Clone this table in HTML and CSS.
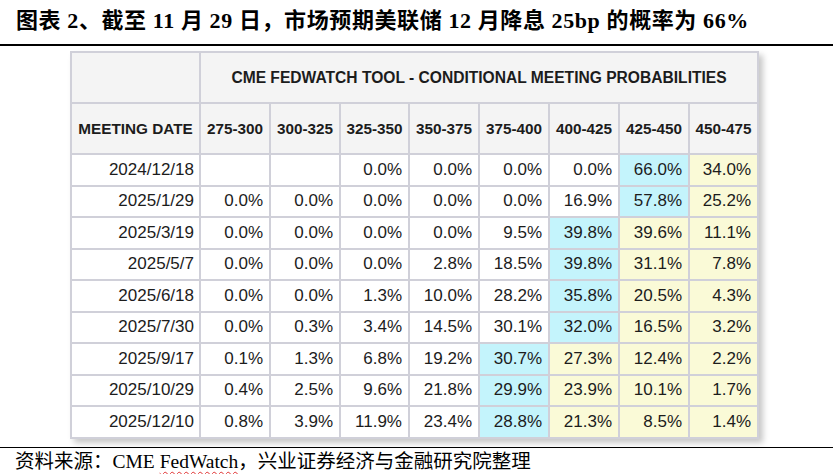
FILE: index.html
```html
<!DOCTYPE html>
<html lang="zh-CN">
<head>
<meta charset="utf-8">
<link rel="stylesheet" href="styles.css">
</head>
<body>
<header class="title">图表 2、截至 11 月 29 日，市场预期美联储 12 月降息 25bp 的概率为 66%</header>
<div class="figure">
<table class="fw">
<colgroup><col class="c-date"><col class="c-a"><col class="c-a"><col class="c-b"><col class="c-a"><col class="c-a"><col class="c-a"><col class="c-a"><col class="c-b"></colgroup>
<thead>
<tr class="h1"><th></th><th colspan="8" class="cap">CME FEDWATCH TOOL - CONDITIONAL MEETING PROBABILITIES</th></tr>
<tr class="h2"><th>MEETING DATE</th><th>275-300</th><th>300-325</th><th>325-350</th><th>350-375</th><th>375-400</th><th>400-425</th><th>425-450</th><th>450-475</th></tr>
</thead>
<tbody>
<tr><td>2024/12/18</td><td></td><td></td><td>0.0%</td><td>0.0%</td><td>0.0%</td><td>0.0%</td><td class="cy">66.0%</td><td class="ye">34.0%</td></tr>
<tr><td>2025/1/29</td><td>0.0%</td><td>0.0%</td><td>0.0%</td><td>0.0%</td><td>0.0%</td><td>16.9%</td><td class="cy">57.8%</td><td class="ye">25.2%</td></tr>
<tr><td>2025/3/19</td><td>0.0%</td><td>0.0%</td><td>0.0%</td><td>0.0%</td><td>9.5%</td><td class="cy">39.8%</td><td class="ye">39.6%</td><td class="ye">11.1%</td></tr>
<tr><td>2025/5/7</td><td>0.0%</td><td>0.0%</td><td>0.0%</td><td>2.8%</td><td>18.5%</td><td class="cy">39.8%</td><td class="ye">31.1%</td><td class="ye">7.8%</td></tr>
<tr><td>2025/6/18</td><td>0.0%</td><td>0.0%</td><td>1.3%</td><td>10.0%</td><td>28.2%</td><td class="cy">35.8%</td><td class="ye">20.5%</td><td class="ye">4.3%</td></tr>
<tr><td>2025/7/30</td><td>0.0%</td><td>0.3%</td><td>3.4%</td><td>14.5%</td><td>30.1%</td><td class="cy">32.0%</td><td class="ye">16.5%</td><td class="ye">3.2%</td></tr>
<tr><td>2025/9/17</td><td>0.1%</td><td>1.3%</td><td>6.8%</td><td>19.2%</td><td class="cy">30.7%</td><td class="ye">27.3%</td><td class="ye">12.4%</td><td class="ye">2.2%</td></tr>
<tr><td>2025/10/29</td><td>0.4%</td><td>2.5%</td><td>9.6%</td><td>21.8%</td><td class="cy">29.9%</td><td class="ye">23.9%</td><td class="ye">10.1%</td><td class="ye">1.7%</td></tr>
<tr><td>2025/12/10</td><td>0.8%</td><td>3.9%</td><td>11.9%</td><td>23.4%</td><td class="cy">28.8%</td><td class="ye">21.3%</td><td class="ye">8.5%</td><td class="ye">1.4%</td></tr>
</tbody>
</table>
</div>
<footer class="source">资料来源：CME <span class="spell">FedWatch</span>，兴业证券经济与金融研究院整理</footer>
</body>
</html>
```
FILE: styles.css
```css
html, body {
  margin: 0;
  padding: 0;
  background: #fff;
}
body {
  width: 838px;
  height: 474px;
  overflow: hidden;
}
.title {
  width: 817px;
  height: 44px;
  padding-left: 16px;
  border-bottom: 2px solid #000;
  font-family: "Liberation Serif", "Noto Sans CJK SC", serif;
  font-weight: bold;
  font-size: 22px;
  letter-spacing: 0.6px;
  line-height: 41px;
  color: #000;
  white-space: nowrap;
}
.figure {
  height: 396px;
  padding: 5px 0 0 70px;
}
.fw {
  table-layout: fixed;
  border-collapse: separate;
  border-spacing: 0;
  width: 689px;
  border-left: 2px solid #d0d0d9;
  border-top: 2px solid #d0d0d9;
  font-family: "Liberation Sans", Arial, sans-serif;
  color: #1c1c1c;
  box-shadow: 4px 4px 6px rgba(0, 0, 0, 0.22);
  background: #fff;
}
.c-date { width: 129px; }
.c-a { width: 70px; }
.c-b { width: 69px; }
.fw th, .fw td {
  box-sizing: border-box;
  border-right: 2px solid #d0d0d9;
  border-bottom: 2px solid #d0d0d9;
  padding: 0;
  white-space: nowrap;
  overflow: hidden;
}
.fw th {
  background: #f4f4f4;
  font-size: 15.3px;
  font-weight: bold;
  text-align: center;
}
.fw th.cap {
  font-size: 15.6px;
}
.fw .h1 th, .fw .h2 th {
  height: 51px;
}
.fw td {
  height: 31.5px;
  font-size: 17px;
  text-align: right;
  padding-right: 6px;
}
.fw td:first-child {
  padding-right: 5px;
}
.fw td.cy { background: #c4f4fc; }
.fw td.ye { background: #fafad7; }
.source {
  width: 818px;
  border-top: 1.5px solid #000;
  padding-left: 15px;
  font-family: "Liberation Serif", "Noto Sans CJK SC", serif;
  font-size: 19.5px;
  line-height: 28px;
  color: #000;
  white-space: nowrap;
}
.spell {
  text-decoration: underline wavy #e03030;
  text-decoration-thickness: 1px;
  text-underline-offset: 3px;
}
```
